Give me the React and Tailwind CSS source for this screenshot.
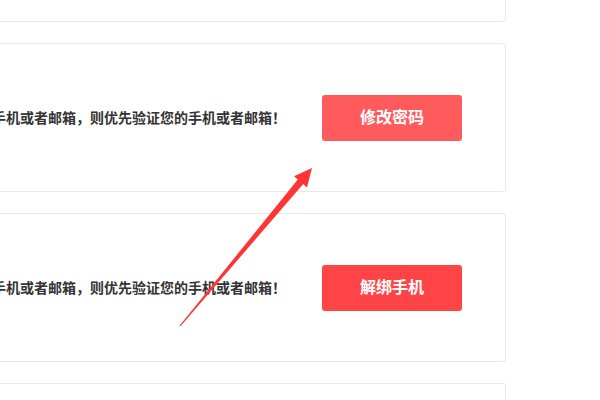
import React from 'react';

const tip = '如果您已绑定手机或者邮箱，则优先验证您的手机或者邮箱！';

const rows = [
    { label: '修改登录', color: 'bg-[#ff5a5c]', text: tip },
    { label: '修改密码', color: 'bg-[#ff5a5c]', text: tip },
    { label: '解绑手机', color: 'bg-[#ff4448]', text: tip },
    { label: '解绑邮箱', color: 'bg-[#ff4448]', text: tip },
];

const Arrow = () => (
    <svg className="absolute left-0 top-0 pointer-events-none" width="600" height="400" viewBox="0 0 600 400">
        <polygon
            fill="#ff3535"
            points="312,168 307,187.5 303.2,184 180.5,326.3 179.5,325.7 297.8,179.6 294,176.2"
        />
    </svg>
);

const Row = ({ label, color, text }) => (
    <div className="-ml-[320px] h-[149px] w-[826px] shrink-0 rounded-[3px] border border-[#e8e8e8] bg-white flex items-center justify-end gap-[36px] pr-[43px]">
        <span className="whitespace-nowrap text-[14px] leading-[20px] -mt-[2px] font-bold text-[#333] [font-variant-east-asian:full-width] [text-spacing-trim:space-all]">{text}</span>
        <button className={`h-[46px] w-[140px] rounded-[3px] ${color} text-[16px] leading-[20px] font-bold text-white`}>
            <span className="block -mt-[3px]">{label}</span>
        </button>
    </div>
);

export default function App() {
    return (
        <div
            lang="zh-CN"
            className="relative h-[400px] w-[600px] overflow-hidden bg-white"
            style={{ fontFamily: '"Noto Sans CJK SC", "Noto Sans", sans-serif' }}
        >
            <div className="-mt-[127px] flex w-[506px] flex-col gap-[21px]">
                {rows.map((r, i) => (
                    <Row key={i} {...r} />
                ))}
            </div>
            <Arrow />
        </div>
    );
}
